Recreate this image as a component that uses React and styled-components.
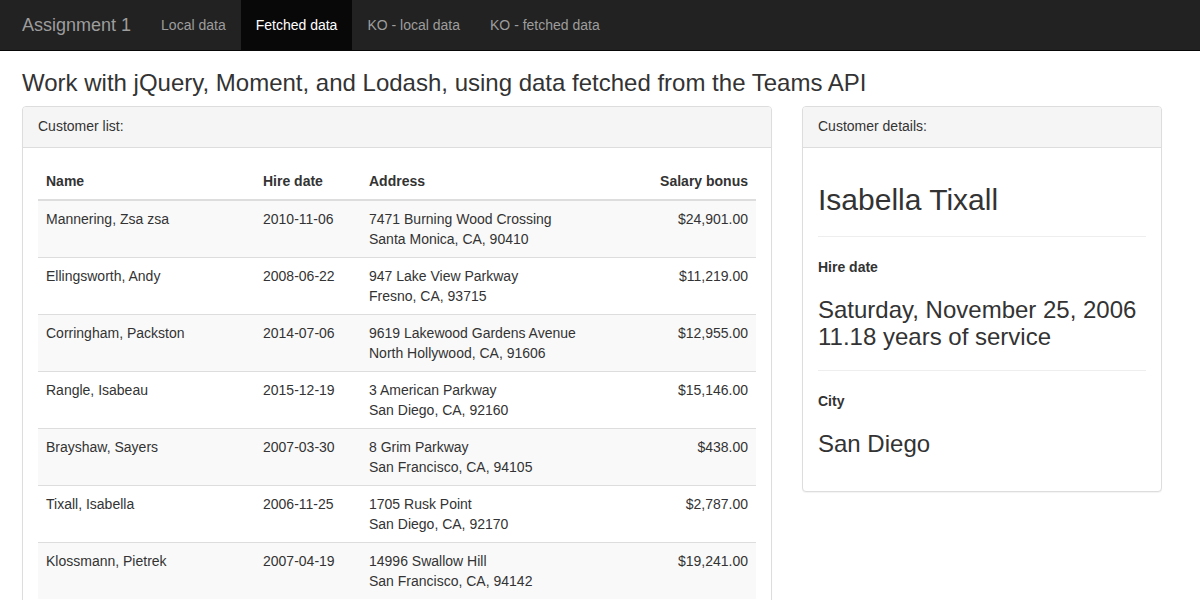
import styled, { createGlobalStyle } from "styled-components";

const GlobalStyle = createGlobalStyle`
  * {
    box-sizing: border-box;
  }
  body {
    margin: 0;
    font-family: "Liberation Sans", Arial, sans-serif;
    font-size: 14px;
    line-height: 1.42857;
    color: #333;
    background: #fff;
  }
`;

const Navbar = styled.nav`
  display: flex;
  align-items: stretch;
  height: 51px;
  padding-left: 7px;
  background: #222;
  border-bottom: 1px solid #080808;
`;

const Brand = styled.a`
  padding: 15px;
  font-size: 18px;
  line-height: 20px;
  color: #9d9d9d;
  text-decoration: none;
`;

const NavLink = styled.a`
  padding: 15px;
  line-height: 20px;
  color: ${(props) => (props.$active ? "#fff" : "#9d9d9d")};
  background: ${(props) => (props.$active ? "#080808" : "transparent")};
  text-decoration: none;
`;

const Container = styled.div`
  padding: 0 22px;
`;

const Title = styled.h3`
  margin: 19px 0 10px;
  font-size: 24px;
  font-weight: 500;
  line-height: 1.1;
`;

const Row = styled.div`
  display: flex;
  align-items: flex-start;
  gap: 30px;
`;

const Panel = styled.div`
  width: ${(props) => props.$width}px;
  border: 1px solid #ddd;
  border-radius: 4px;
  background: #fff;
  box-shadow: 0 1px 1px rgba(0, 0, 0, 0.05);
`;

const PanelHeading = styled.div`
  padding: 10px 15px;
  background: #f5f5f5;
  border-bottom: 1px solid #ddd;
  border-radius: 3px 3px 0 0;
`;

const PanelBody = styled.div`
  padding: 15px;
`;

const Table = styled.table`
  width: 100%;
  border-collapse: collapse;
  border-spacing: 0;
`;

const Th = styled.th`
  padding: 8px;
  text-align: ${(props) => props.$align || "left"};
  width: ${(props) => (props.$width ? `${props.$width}px` : "auto")};
  border-bottom: 2px solid #ddd;
  line-height: 20px;
  vertical-align: bottom;
`;

const Tr = styled.tr`
  &:nth-child(odd) {
    background: #f9f9f9;
  }
`;

const Td = styled.td`
  padding: 8px;
  line-height: 20px;
  vertical-align: top;
  text-align: ${(props) => props.$align || "left"};
  border-top: 1px solid #ddd;
`;

const Name = styled.h2`
  margin: 20px 0 0;
  font-size: 30px;
  font-weight: 500;
  line-height: 1.1;
`;

const Rule = styled.hr`
  margin: 20px 0;
  border: 0;
  border-top: 1px solid #eee;
`;

const Label = styled.h5`
  margin: 0;
  font-size: 14px;
  font-weight: bold;
  line-height: 20px;
`;

const Value = styled.h3`
  margin: 20px 0 ${(props) => (props.$last ? "18px" : "0")};
  font-size: 24px;
  font-weight: 500;
  line-height: 1.1;
`;

const customers = [
  ["Mannering, Zsa zsa", "2010-11-06", "7471 Burning Wood Crossing", "Santa Monica, CA, 90410", "$24,901.00"],
  ["Ellingsworth, Andy", "2008-06-22", "947 Lake View Parkway", "Fresno, CA, 93715", "$11,219.00"],
  ["Corringham, Packston", "2014-07-06", "9619 Lakewood Gardens Avenue", "North Hollywood, CA, 91606", "$12,955.00"],
  ["Rangle, Isabeau", "2015-12-19", "3 American Parkway", "San Diego, CA, 92160", "$15,146.00"],
  ["Brayshaw, Sayers", "2007-03-30", "8 Grim Parkway", "San Francisco, CA, 94105", "$438.00"],
  ["Tixall, Isabella", "2006-11-25", "1705 Rusk Point", "San Diego, CA, 92170", "$2,787.00"],
  ["Klossmann, Pietrek", "2007-04-19", "14996 Swallow Hill", "San Francisco, CA, 94142", "$19,241.00"],
];

export default function App() {
  return (
    <>
      <GlobalStyle />
      <Navbar>
        <Brand href="#">Assignment 1</Brand>
        <NavLink href="#">Local data</NavLink>
        <NavLink href="#" $active>
          Fetched data
        </NavLink>
        <NavLink href="#">KO - local data</NavLink>
        <NavLink href="#">KO - fetched data</NavLink>
      </Navbar>
      <Container>
        <Title>Work with jQuery, Moment, and Lodash, using data fetched from the Teams API</Title>
        <Row>
          <Panel $width={750}>
            <PanelHeading>Customer list:</PanelHeading>
            <PanelBody>
              <Table>
                <thead>
                  <tr>
                    <Th $width={217}>Name</Th>
                    <Th $width={106}>Hire date</Th>
                    <Th>Address</Th>
                    <Th $align="right" $width={120}>
                      Salary bonus
                    </Th>
                  </tr>
                </thead>
                <tbody>
                  {customers.map(([name, date, street, city, bonus]) => (
                    <Tr key={name}>
                      <Td>{name}</Td>
                      <Td>{date}</Td>
                      <Td>
                        {street}
                        <br />
                        {city}
                      </Td>
                      <Td $align="right">{bonus}</Td>
                    </Tr>
                  ))}
                </tbody>
              </Table>
            </PanelBody>
          </Panel>
          <Panel $width={360}>
            <PanelHeading>Customer details:</PanelHeading>
            <PanelBody>
              <Name>Isabella Tixall</Name>
              <Rule />
              <Label>Hire date</Label>
              <Value>
                Saturday, November 25, 2006
                <br />
                11.18 years of service
              </Value>
              <Rule />
              <Label>City</Label>
              <Value $last>San Diego</Value>
            </PanelBody>
          </Panel>
        </Row>
      </Container>
    </>
  );
}
